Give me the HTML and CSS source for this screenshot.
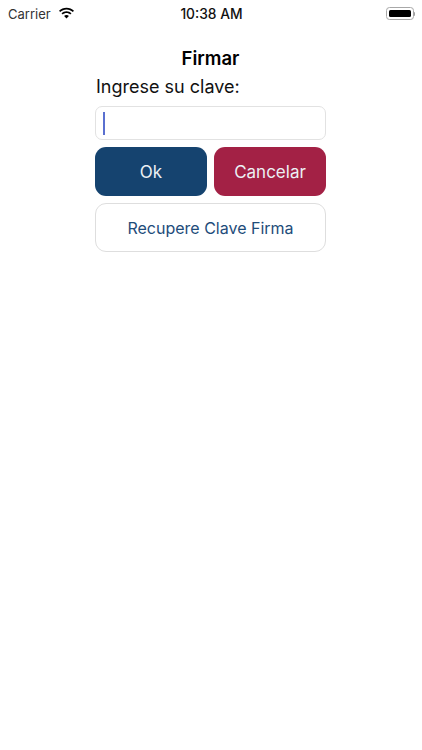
FILE: index.html
```html
<!DOCTYPE html>
<html lang="es">
<head>
<meta charset="utf-8">
<title>Firmar</title>
<link rel="stylesheet" href="styles.css">
</head>
<body>
<div class="status">
  <div class="status-left">
    <span class="carrier">Carrier</span>
    <svg class="wifi" width="17" height="12" viewBox="0 0 17 12"><path d="M8.5 2.6c2.4 0 4.6.9 6.3 2.5l1.2-1.3C14 1.900 11.400.8 8.500.8S3 1.900 1 3.800l1.200 1.300C3.900 3.500 6.100 2.600 8.500 2.600z"/><path d="M8.500 6.100c1.400 0 2.700.5 3.700 1.500l1.300-1.300C12.200 5 10.400 4.300 8.500 4.300S4.800 5 3.500 6.300l1.300 1.300c1-1 2.300-1.500 3.700-1.500z"/><path d="M8.500 7.900c-1 0-1.800.4-2.400 1l2.400 2.500 2.400-2.500c-.6-.6-1.400-1-2.400-1z"/></svg>
  </div>
  <span class="time">10:38 AM</span>
  <div class="battery"><span class="battery-shell"><span class="battery-fill"></span></span><span class="battery-tip"></span></div>
</div>
<main class="form">
  <h1 class="title">Firmar</h1>
  <label class="label" for="clave">Ingrese su clave:</label>
  <div class="input" id="clave"><span class="caret"></span></div>
  <div class="actions">
    <button class="btn btn-ok">Ok</button>
    <button class="btn btn-cancel">Cancelar</button>
  </div>
  <button class="btn btn-recover">Recupere Clave Firma</button>
</main>
</body>
</html>
```
FILE: styles.css
```css
* { box-sizing: border-box; }
html, body { margin: 0; padding: 0; background: #fff; }
body { width: 422px; height: 750px; overflow: hidden; font-family: Inter, "Liberation Sans", sans-serif; color: #000; }
.status { display: grid; grid-template-columns: 1fr auto 1fr; align-items: center; height: 26px; padding: 1px 7px 0 8px; }
.status-left { display: flex; align-items: center; gap: 7px; }
.carrier { font-size: 13px; color: #333; }
.wifi { display: block; margin-top: -1px; }
.time { font-size: 13.800px; font-weight: 500; color: #111; }
.battery { display: flex; justify-content: flex-end; align-items: center; }
.battery-shell { display: block; width: 28px; height: 13px; padding: 2px; border: 1.500px solid #a8a8a8; border-radius: 3.500px; }
.battery-fill { display: block; height: 100%; background: #000; border-radius: 1.500px; }
.battery-tip { display: block; width: 1.500px; height: 4px; background: #a0a0a0; border-radius: 0 1px 1px 0; }
.form { display: flex; flex-direction: column; width: 231px; margin: 0 auto 0 95px; }
.title { margin: 21px 0 0; height: 22px; font-size: 18.500px; line-height: 22px; font-weight: 600; text-align: center; }
.label { margin-top: 5px; margin-left: 1px; height: 26px; font-size: 18px; line-height: 26px; color: #111; }
.input { display: flex; align-items: center; height: 34px; margin-top: 6px; padding-left: 7px; border: 1px solid #e2e2e2; border-radius: 7px; }
.caret { display: block; width: 2px; height: 23px; background: #5a70d0; }
.actions { display: grid; grid-template-columns: 112px 112px; justify-content: space-between; margin-top: 7px; }
.btn { display: block; margin: 0; padding: 0; font-family: inherit; font-size: 17px; border-radius: 11px; border: 1px solid transparent; }
.btn-ok, .btn-cancel { height: 49px; color: #ecf0f4; }
.btn-ok { background: #15436f; }
.btn-cancel { background: #a32145; }
.btn-recover { height: 49px; margin-top: 7px; background: #fff; color: #1e4c7a; font-size: 16px; border: 1px solid #dedede; }
```
